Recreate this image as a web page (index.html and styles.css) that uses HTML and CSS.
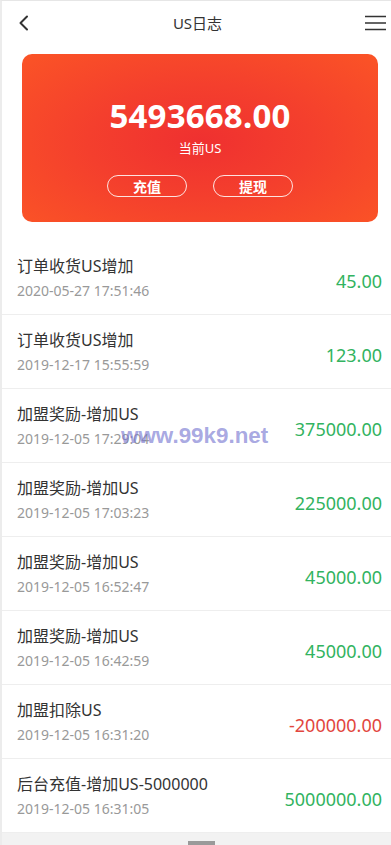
FILE: index.html
```html
<!DOCTYPE html>
<html lang="zh">
<head>
<meta charset="utf-8">
<title>US日志</title>
<link rel="stylesheet" href="styles.css">
</head>
<body>
<div class="page">
  <header class="topbar">
    <svg class="back" width="12" height="16" viewBox="0 0 12 16"><path d="M9 1.5 L2.5 8 L9 14.5" fill="none" stroke="#333" stroke-width="2" stroke-linecap="round" stroke-linejoin="round"/></svg>
    <h1 class="title">US日志</h1>
    <svg class="menu" width="21" height="16" viewBox="0 0 21 16"><path d="M0 1.5H21M0 8H21M0 14.5H21" stroke="#333" stroke-width="1.4"/></svg>
  </header>

  <section class="card">
    <div class="balance">5493668.00</div>
    <div class="label">当前US</div>
    <div class="actions">
      <button class="btn">充值</button>
      <button class="btn">提现</button>
    </div>
  </section>

  <ul class="list">
    <li class="row"><div class="info"><div class="name">订单收货US增加</div><div class="time">2020-05-27 17:51:46</div></div><div class="amt pos">45.00</div></li>
    <li class="row"><div class="info"><div class="name">订单收货US增加</div><div class="time">2019-12-17 15:55:59</div></div><div class="amt pos">123.00</div></li>
    <li class="row"><div class="info"><div class="name">加盟奖励-增加US</div><div class="time">2019-12-05 17:29:04</div></div><div class="amt pos">375000.00</div><span class="watermark">www.99k9.net</span></li>
    <li class="row"><div class="info"><div class="name">加盟奖励-增加US</div><div class="time">2019-12-05 17:03:23</div></div><div class="amt pos">225000.00</div></li>
    <li class="row"><div class="info"><div class="name">加盟奖励-增加US</div><div class="time">2019-12-05 16:52:47</div></div><div class="amt pos">45000.00</div></li>
    <li class="row"><div class="info"><div class="name">加盟奖励-增加US</div><div class="time">2019-12-05 16:42:59</div></div><div class="amt pos">45000.00</div></li>
    <li class="row"><div class="info"><div class="name">加盟扣除US</div><div class="time">2019-12-05 16:31:20</div></div><div class="amt neg">-200000.00</div></li>
    <li class="row"><div class="info"><div class="name">后台充值-增加US-5000000</div><div class="time">2019-12-05 16:31:05</div></div><div class="amt pos">5000000.00</div></li>
  </ul>
  <div class="footer"><span class="handle"></span></div>
</div>
</body>
</html>
```

FILE: styles.css
```css
html, body {
  margin: 0;
  padding: 0;
  overflow: hidden;
  background: #fff;
}
body {
  font-family: "Noto Sans", "Noto Sans CJK SC", sans-serif;
  color: #333;
}
.page {
  width: 400px;
  border-top: 1px solid #e6e6e6;
  border-left: 2px solid #ececec;
  box-sizing: border-box;
}
.topbar {
  height: 43px;
  display: flex;
  align-items: center;
  justify-content: space-between;
  padding: 0 14px 0 16px;
}
.back { display: block; }
.menu { display: block; }
.title {
  margin: 0;
  font-size: 15px;
  font-weight: 400;
  color: #333;
}
.card {
  margin: 10px 22px 0 20px;
  height: 168px;
  border-radius: 10px;
  background: radial-gradient(ellipse 70% 75% at 50% 52%, #ef3030 0%, #f43f2d 45%, #fb5426 100%);
  color: #fff;
  display: flex;
  flex-direction: column;
  align-items: center;
  padding-top: 42px;
  box-sizing: border-box;
}
.balance {
  font-size: 33px;
  font-weight: 700;
  line-height: 40px;
  letter-spacing: 0.2px;
}
.label {
  font-size: 13px;
  line-height: 18px;
  margin-top: 3px;
}
.actions {
  display: flex;
  gap: 26px;
  margin-top: 18px;
}
.btn {
  width: 80px;
  height: 22px;
  border: 1px solid rgba(255,255,255,0.85);
  border-radius: 11px;
  background: transparent;
  color: #fff;
  font-family: "Noto Sans CJK SC", sans-serif;
  font-size: 14px;
  font-weight: 700;
  line-height: 20px;
  padding: 0;
}
.list {
  list-style: none;
  margin: 19px 0 0;
  padding: 0;
}
.row {
  position: relative;
  height: 74px;
  border-bottom: 1px solid #eeeeee;
  display: flex;
  align-items: center;
  justify-content: space-between;
  padding: 0 18px 0 15px;
  box-sizing: border-box;
}
.info { padding-top: 1px; }
.name {
  font-size: 16px;
  line-height: 21px;
  color: #333;
}
.time {
  font-size: 14px;
  line-height: 18px;
  margin-top: 5px;
  color: #999;
}
.amt {
  font-size: 18px;
  margin-top: 6px;
}
.pos { color: #32b360; }
.neg { color: #e2463e; }
.watermark {
  position: absolute;
  left: 119px;
  top: 35px;
  font-family: "Liberation Sans", Arial, sans-serif;
  font-weight: 700;
  font-size: 22.4px;
  line-height: 24px;
  color: rgba(120, 120, 210, 0.65);
  pointer-events: none;
}
.footer {
  height: 12px;
  background: #f2f2f2;
  display: flex;
  justify-content: center;
  align-items: flex-end;
}
.handle {
  width: 27px;
  height: 4px;
  background: #9a9a9a;
}
```
